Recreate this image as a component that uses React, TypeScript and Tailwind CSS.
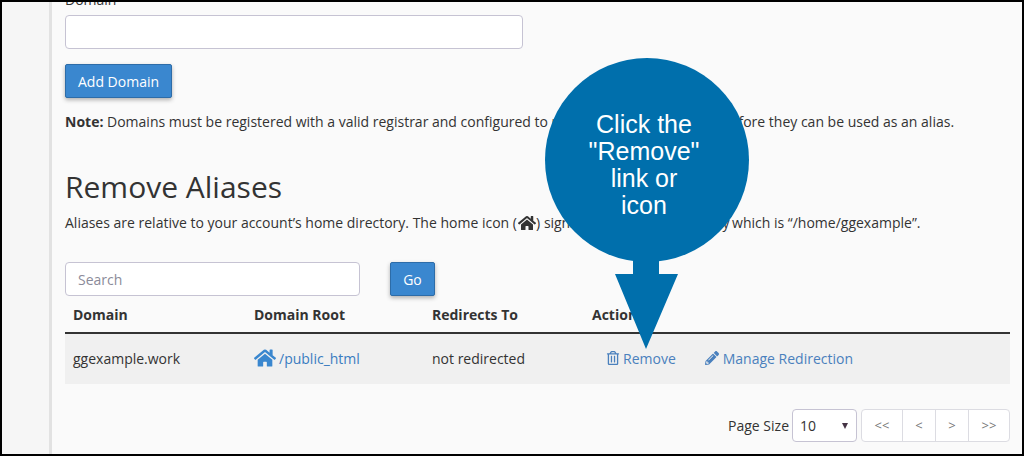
import { FaHome, FaPencilAlt, FaRegTrashAlt } from "react-icons/fa";

const font = { fontFamily: '"Open Sans", sans-serif' };

function Callout() {
  return (
    <div className="absolute left-[541px] top-[54px] w-[208px] h-[295px]">
      <svg width="208" height="295" viewBox="0 0 208 295" className="absolute left-0 top-0">
        <circle cx="104" cy="104" r="102" fill="#006fac" />
        <path d="M90 195 L90 218 L72 218 L103 293 L135 218 L116 218 L116 195 Z" fill="#006fac" />
      </svg>
      <div className="absolute left-0 top-[55px] w-[202px] text-center text-white text-[25px] leading-[27px] font-['Liberation_Sans',sans-serif]">
        <div>Click the</div>
        <div>"Remove"</div>
        <div>link or</div>
        <div>icon</div>
      </div>
    </div>
  );
}

export default function App() {
  return (
    <div className="relative w-[1024px] h-[456px] overflow-hidden border-2 border-black bg-[#fafafa] flex text-[14px] text-[#333]" style={font}>
      <div className="w-[50px] shrink-0 bg-[#f6f6f6] border-r-[3px] border-[#e2e2e2]" />
      <div className="flex-1 pl-[13px] pr-[12px] flex flex-col">
        <div className="-mt-[12px] h-[20px] leading-[20px] text-[14px]">Domain</div>
        <input className="mt-[5px] h-[34px] w-[458px] bg-white border border-[#c6c3d3] rounded" />
        <button className="mt-[15px] h-[34px] w-[107px] bg-[#3a87cf] border border-[#2d6ca8] rounded-[2px] text-white text-[14px] shadow-[0_2px_4px_rgba(0,0,0,0.3)]">Add Domain</button>
        <p className="mt-[14px] leading-[20px] whitespace-nowrap text-[14px]">
          <b>Note:</b> Domains must be registered with a valid registrar and configured to <span className="mr-[1px]">point to our nameservers</span> before they can be used as an alias.
        </p>
        <h2 className="mt-[37px] text-[30px] leading-[36px] text-[#333]">Remove Aliases</h2>
        <p className="mt-[8px] leading-[20px] whitespace-nowrap flex items-center">
          Aliases are relative to your account’s home directory. The home icon (<FaHome className="text-[18px] text-[#333] ml-[1px]" />) <span className="ml-[4px] -mr-[1px] tracking-[-0.15px]">signifies your home directory</span>&nbsp;which is “/home/ggexample”.
        </p>
        <div className="mt-[29px] flex items-center gap-[30px]">
          <input placeholder="Search" className="h-[34px] w-[295px] px-[12px] bg-white border border-[#c6c3d3] rounded text-[14px] placeholder:text-[#8b8b99]" />
          <button className="h-[34px] w-[45px] bg-[#3a87cf] border border-[#2d6ca8] rounded-[2px] text-white text-[14px] shadow-[0_2px_4px_rgba(0,0,0,0.3)]">Go</button>
        </div>
        <div className="h-[38px] w-[945px] grid grid-cols-[181px_178px_160px_1fr] pl-[8px] font-bold items-center border-b-2 border-[#333]">
          <div>Domain</div>
          <div>Domain Root</div>
          <div>Redirects To</div>
          <div>Actions</div>
        </div>
        <div className="h-[50px] w-[945px] grid grid-cols-[181px_178px_160px_1fr] pl-[8px] pb-[2px] items-center bg-[#f0f0f0]">
          <div>ggexample.work</div>
          <div className="flex items-center gap-[3px] text-[#3a7cc0]">
            <FaHome className="text-[22px] text-[#3a87cf]" />
            /public_html
          </div>
          <div>not redirected</div>
          <div className="flex items-center text-[#4a80bd]">
            <FaRegTrashAlt className="text-[14px] mr-[3px] ml-[14px]" />
            Remove
            <FaPencilAlt className="text-[14px] ml-[29px] mr-[4px]" />
            Manage Redirection
          </div>
        </div>
        <div className="mt-[25px] w-[945px] flex items-center justify-end">
          <span className="mr-[3px]">Page Size</span>
          <div className="h-[33px] w-[65px] bg-white border border-[#c6c3d3] rounded flex items-center justify-between pl-[7px] pr-[8px]">
            <span>10</span>
            <span className="w-0 h-0 border-x-[3px] border-t-[6px] border-x-transparent border-t-[#443344]" />
          </div>
          <div className="ml-[4px] h-[33px] w-[149px] bg-white border border-[#dcdce2] rounded flex text-[#777] text-[13px]">
            <div className="w-[41px] flex items-center justify-center border-r border-[#dcdce2]">&lt;&lt;</div>
            <div className="w-[33px] flex items-center justify-center border-r border-[#dcdce2]">&lt;</div>
            <div className="w-[33px] flex items-center justify-center border-r border-[#dcdce2]">&gt;</div>
            <div className="flex-1 flex items-center justify-center">&gt;&gt;</div>
          </div>
        </div>
      </div>
      <Callout />
    </div>
  );
}
